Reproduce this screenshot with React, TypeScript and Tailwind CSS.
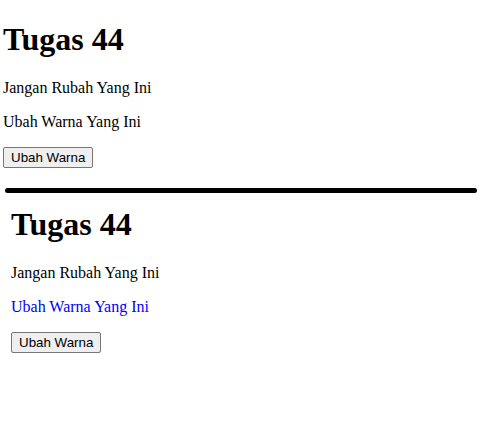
import React from "react";

function Section({ blue, className }: { blue?: boolean; className: string }) {
  return (
    <div className={`flex flex-col items-start ${className}`}>
      <h1 className="h-[37px] text-[32px] font-bold leading-[37px]">Tugas 44</h1>
      <p className="mt-[21px] h-[18px] text-[16px] leading-[18px]">Jangan Rubah Yang Ini</p>
      <p className={`mt-[16px] h-[18px] text-[16px] leading-[18px] ${blue ? "text-[#0000ff]" : ""}`}>
        Ubah Warna Yang Ini
      </p>
      <button className="mt-[16px] h-[21px] rounded-[2px] border border-[#767676] bg-[#efefef] px-[7px] font-['Liberation_Sans',Arial,sans-serif] text-[13.33px] leading-[15px] text-black">
        Ubah Warna
      </button>
    </div>
  );
}

export default function App() {
  return (
    <div className="min-h-[428px] w-[481px] bg-white font-['Liberation_Serif','Times_New_Roman',serif] text-black">
      <Section className="pl-[3px] pt-[21px]" />
      <div className="ml-[5px] mt-[20px] h-[5px] w-[472px] rounded-full bg-black" />
      <Section blue className="pl-[11px] pt-[13px]" />
    </div>
  );
}
